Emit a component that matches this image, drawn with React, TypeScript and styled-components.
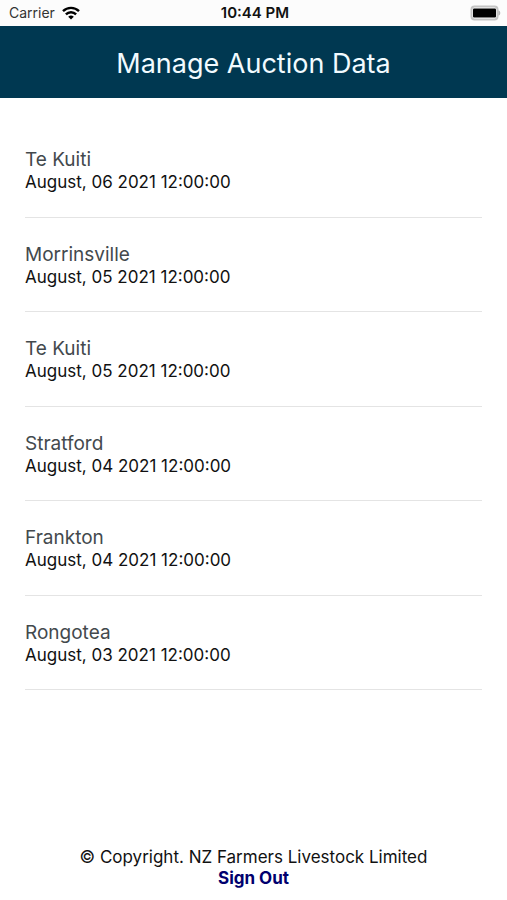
import React from "react";
import styled, { createGlobalStyle } from "styled-components";

const GlobalStyle = createGlobalStyle`
  *, *::before, *::after { box-sizing: border-box; }
  body {
    margin: 0;
    background: #ffffff;
    color: #111111;
    font-family: Inter, "Liberation Sans", sans-serif;
  }
`;

const Screen = styled.div`
  display: flex;
  flex-direction: column;
  min-height: 100vh;
`;

const StatusBar = styled.div`
  display: grid;
  grid-template-columns: 1fr auto 1fr;
  align-items: center;
  height: 26px;
  padding: 0 6px 0 9px;
  background: #fcfcfc;
  font-size: 14px;
  line-height: 26px;
`;

const Carrier = styled.div`
  display: flex;
  align-items: center;
  gap: 7px;
  color: #333333;
`;

const Clock = styled.time`
  font-size: 15px;
  font-weight: 600;
`;

const Battery = styled.div`
  display: flex;
  justify-content: flex-end;
`;

const Header = styled.header`
  padding: 20px 24px 16px;
  background: #003851;
  color: #f2fbff;
`;

const Title = styled.h1`
  margin: 0;
  font-size: 27px;
  font-weight: 400;
  line-height: 36px;
  text-align: center;
`;

const AuctionList = styled.ul`
  flex: 1;
  margin: 0;
  padding: 25px 25px 0;
  list-style: none;
`;

const AuctionItem = styled.li`
  padding: 26px 0 24px;
  border-bottom: 1px solid #e4e4e4;

  &:nth-child(even) {
    padding-bottom: 23px;
  }
`;

const Place = styled.div`
  color: #43494d;
  font-size: 19px;
  line-height: 22px;
`;

const DateText = styled.time`
  display: block;
  font-size: 17px;
  line-height: 22px;
`;

const Footer = styled.footer`
  padding-bottom: 11px;
  text-align: center;
  font-size: 17px;
  line-height: 21px;
`;

const SignOut = styled.a`
  color: #00006e;
  font-weight: 700;
  text-decoration: none;
`;

const auctions = [
  { place: "Te Kuiti", date: "August, 06 2021 12:00:00" },
  { place: "Morrinsville", date: "August, 05 2021 12:00:00" },
  { place: "Te Kuiti", date: "August, 05 2021 12:00:00" },
  { place: "Stratford", date: "August, 04 2021 12:00:00" },
  { place: "Frankton", date: "August, 04 2021 12:00:00" },
  { place: "Rongotea", date: "August, 03 2021 12:00:00" },
];

const WifiIcon = () => (
  <svg width="18" height="14" viewBox="0 0 18 14" aria-hidden="true">
    <g fill="none" stroke="#000" strokeWidth="2.4">
      <path d="M1 5.2a11.4 11.4 0 0 1 16 0" />
      <path d="M3.9 8.4a7.1 7.1 0 0 1 10.2 0" />
    </g>
    <path d="M6.2 10.8a4 4 0 0 1 5.6 0L9 13.6z" />
  </svg>
);

const BatteryIcon = () => (
  <svg width="31" height="16" viewBox="0 0 31 16" aria-hidden="true">
    <rect x="1.5" y="1.5" width="26" height="13" rx="3" fill="#fff" stroke="#c4c4c4" strokeWidth="2" />
    <rect x="3" y="3.5" width="23" height="9" rx="1" />
    <path d="M28.4 5.2a3 3 0 0 1 0 5.6z" fill="#b4b4b4" />
  </svg>
);

export default function App() {
  return (
    <Screen>
      <GlobalStyle />
      <StatusBar>
        <Carrier>
          Carrier
          <WifiIcon />
        </Carrier>
        <Clock>10:44 PM</Clock>
        <Battery>
          <BatteryIcon />
        </Battery>
      </StatusBar>
      <Header>
        <Title>Manage Auction Data</Title>
      </Header>
      <AuctionList>
        {auctions.map((auction, index) => (
          <AuctionItem key={index}>
            <Place>{auction.place}</Place>
            <DateText>{auction.date}</DateText>
          </AuctionItem>
        ))}
      </AuctionList>
      <Footer>
        <div>© Copyright. NZ Farmers Livestock Limited</div>
        <SignOut href="#sign-out">Sign Out</SignOut>
      </Footer>
    </Screen>
  );
}
